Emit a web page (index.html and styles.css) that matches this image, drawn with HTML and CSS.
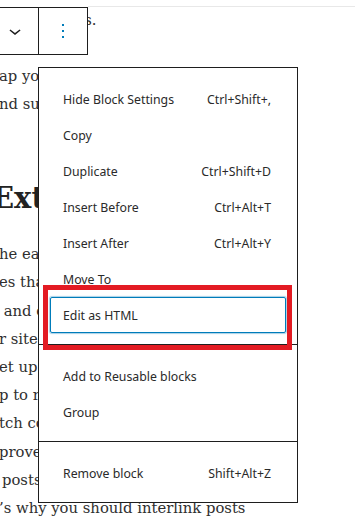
FILE: index.html
```html
<!DOCTYPE html>
<html>
<head>
    <link rel="stylesheet" href="styles.css">
</head>
<body>

<div class="canvas">
  <div class="top-edge"></div>

  <article class="post">
    <p>on our posts.</p>
    <p>ap your content and<br>nd submit it to the</p>
    <h2>External Links</h2>
    <p>he easiest way to get<br>es that are relevant<br>&nbsp;and earn trust from<br>r site will rank<br>et up a few links<br>p to readers who<br>tch content with<br>prove your ranking<br>&thinsp;posts and pages.<br>&rsquo;s why you should interlink posts</p>
  </article>

  <div class="block-toolbar">
    <button type="button" class="tool tool-move">
      <svg width="24" height="24" viewBox="0 0 24 24"><path d="M17.5 11.6L12 16l-5.5-4.4.9-1.2L12 14l4.6-3.6 1 1.2z"/></svg>
    </button>
    <button type="button" class="tool tool-more">
      <svg width="24" height="24" viewBox="0 0 24 24"><path d="M13 19h-2v-2h2v2zm0-6h-2v-2h2v2zm0-6h-2V5h2v2z"/></svg>
    </button>
  </div>

  <div class="block-menu">
    <div class="menu-group first">
      <button type="button" class="menu-item"><span>Hide Block Settings</span><span class="shortcut">Ctrl+Shift+,</span></button>
      <button type="button" class="menu-item"><span>Copy</span></button>
      <button type="button" class="menu-item"><span>Duplicate</span><span class="shortcut">Ctrl+Shift+D</span></button>
      <button type="button" class="menu-item"><span>Insert Before</span><span class="shortcut">Ctrl+Alt+T</span></button>
      <button type="button" class="menu-item"><span>Insert After</span><span class="shortcut">Ctrl+Alt+Y</span></button>
      <button type="button" class="menu-item"><span>Move To</span></button>
      <button type="button" class="menu-item focused"><span>Edit as HTML</span></button>
    </div>
    <div class="menu-group">
      <button type="button" class="menu-item"><span>Add to Reusable blocks</span></button>
      <button type="button" class="menu-item"><span>Group</span></button>
    </div>
    <div class="menu-group">
      <button type="button" class="menu-item"><span>Remove block</span><span class="shortcut">Shift+Alt+Z</span></button>
    </div>
  </div>

  <div class="annotation"></div>
</div>

</body>
</html>
```

FILE: styles.css
```css
* {box-sizing: border-box}

body {
  margin: 0;
  background: #fff;
}

.canvas {
  position: relative;
  width: 355px;
  height: 516px;
  overflow: hidden;
}

.top-edge {
  position: absolute;
  top: 6px;
  left: 88px;
  right: 0;
  height: 1px;
  background: #e8e8e8;
}

/* post text behind the menu */
.post {
  margin-left: -1px;
  padding-top: 5.5px;
  font-family: "DejaVu Serif", serif;
  font-size: 14.8px;
  line-height: 28.2px;
  color: #2f2f2f;
  white-space: nowrap;
}

.post p {
  margin: 0 0 28.2px;
}

.post h2 {
  font-size: 29px;
  line-height: 36px;
  margin: 62px 0 23.8px -7px;
  color: #222;
}

/* block toolbar */
.block-toolbar {
  position: absolute;
  top: 7px;
  left: -10px;
  width: 98px;
  height: 48px;
  display: flex;
  background: #fff;
  border: 1px solid #1e1e1e;
}

.tool {
  display: flex;
  align-items: center;
  justify-content: center;
  padding: 0;
  border: none;
  background: none;
}

.tool-move {
  width: 48px;
  border-right: 1px solid #1e1e1e;
}

.tool-move svg {
  fill: #1e1e1e;
}

.tool-more {
  flex: 1;
}

.tool-more svg {
  fill: #007cba;
}

/* settings dropdown */
.block-menu {
  position: absolute;
  top: 67px;
  left: 38px;
  width: 260px;
  background: #fff;
  border: 1px solid #1e1e1e;
  font-family: "Noto Sans", sans-serif;
  font-size: 12.3px;
  color: #2a2a2a;
}

.menu-group {
  padding: 13px 0 11px;
}

.menu-group + .menu-group {
  border-top: 1px solid #1e1e1e;
}

.menu-item {
  display: flex;
  align-items: center;
  justify-content: space-between;
  width: 236px;
  height: 36px;
  margin-left: 11px;
  padding: 0 14px 0 12px;
  border: 1px solid transparent;
  border-radius: 2px;
  background: none;
  font: inherit;
  color: inherit;
  text-align: left;
}

.menu-item.focused {
  border-color: #007cba;
  box-shadow: 0 0 1px 1px rgba(0, 124, 186, 0.35);
}

.shortcut {
  white-space: nowrap;
}

/* red highlight drawn over the screenshot */
.annotation {
  position: absolute;
  top: 285px;
  left: 43px;
  width: 249px;
  height: 65px;
  border: 5.5px solid #e31b23;
}
```
